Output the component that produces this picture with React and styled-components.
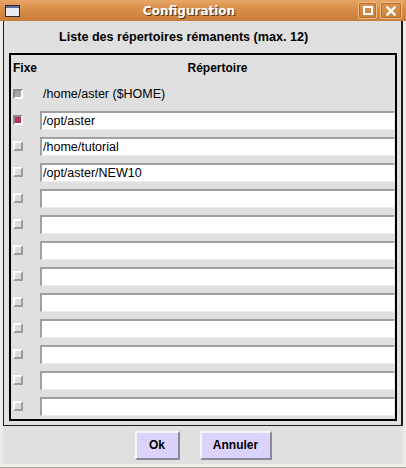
import React from 'react'
import styled, { createGlobalStyle } from 'styled-components'

const GlobalStyle = createGlobalStyle`
html, body {
  margin: 0;
  padding: 0;
  background: #efebe7;
}
body {
  font-family: "Liberation Sans", Arial, sans-serif;
}
`

const Window = styled.div`
width: 406px;
height: 468px;
box-sizing: border-box;
display: flex;
flex-direction: column;
background: #efebe7;
border-bottom: 1px solid #a8a49c;
`

const TitleBar = styled.div`
height: 21px;
flex: none;
display: flex;
align-items: center;
padding: 0 4px 0 5px;
background: linear-gradient(#e8a768, #d88d47 45%, #c87d39);
`

const Title = styled.div`
flex: 1;
text-align: center;
font-family: "DejaVu Sans", sans-serif;
font-weight: bold;
font-size: 12px;
color: #ffffff;
text-shadow: 1px 1px 0 #5a3210;
padding-top: 1px;
`

const TitleButton = styled.div`
width: ${p => p.$w}px;
height: 17px;
box-sizing: border-box;
margin-left: ${p => p.$gap}px;
display: flex;
align-items: center;
justify-content: center;
border: 1px solid #f0bd86;
border-radius: 2px;
background: linear-gradient(#dc9550, #c97f3b);
box-shadow: inset 0 0 0 1px #b86e2e;
`

const Body = styled.div`
flex: 1;
display: flex;
flex-direction: column;
margin: 0 3px 3px 3px;
background: #e0e0e0;
`

const OuterFrame = styled.div`
display: flex;
flex-direction: column;
border-left: 1px solid #1c1c1c;
border-right: 2px solid #1c1c1c;
border-bottom: 1px solid #1c1c1c;
padding: 0 4px 4px 5px;
`

const Heading = styled.div`
height: 32px;
display: flex;
align-items: center;
padding-left: 50px;
font-weight: bold;
font-size: 12.6px;
color: #000;
`

const Table = styled.div`
border: 2px solid #000;
display: grid;
grid-template-columns: 29px 1fr;
grid-auto-rows: 26px;
align-items: center;
`

const HeadCell = styled.div`
font-weight: bold;
font-size: 12px;
color: #000;
text-align: ${p => p.$center ? 'center' : 'left'};
padding-left: ${p => p.$center ? 0 : 2}px;
`

const Check = styled.span`
display: block;
width: 10px;
height: 10px;
box-sizing: border-box;
margin-left: 2px;
border: 2px solid;
border-color: ${p => p.$state === 'off' ? '#ffffff #9c9c9c #9c9c9c #ffffff' : '#8a8a8a #ffffff #ffffff #8a8a8a'};
background: ${p => p.$state === 'on' ? '#b03060' : p.$state === 'disabled' ? '#a6a6a6' : '#dcdcdc'};
`

const FixedLabel = styled.div`
font-size: 12.5px;
color: #000;
padding-left: 3px;
`

const Entry = styled.input`
display: block;
width: 100%;
height: 19px;
margin: 0;
box-sizing: border-box;
border-style: solid;
border-width: 2px 1px 1px 2px;
border-color: #a0a0a0 #ececec #ececec #a0a0a0;
background: #ffffff;
padding: 0 0 0 1px;
font-family: "Liberation Sans", Arial, sans-serif;
font-size: 12.5px;
color: #000;
outline: none;
`

const Footer = styled.div`
flex: 1;
display: flex;
align-items: center;
justify-content: center;
gap: 20px;
`

const Button = styled.button`
width: ${p => p.$w}px;
height: 29px;
box-sizing: border-box;
padding: 0;
border: 2px solid;
border-color: #f7f4ff #8c8898 #8c8898 #f7f4ff;
background: #dcd3fd;
font-family: "Liberation Sans", Arial, sans-serif;
font-weight: bold;
font-size: 12px;
color: #000;
`

const dirs = ['/opt/aster', '/home/tutorial', '/opt/aster/NEW10', '', '', '', '', '', '', '', '', '']

export default function App() {
  return (
    <>
      <GlobalStyle />
      <Window>
        <TitleBar>
          <svg width="15" height="12" viewBox="0 0 15 12">
            <rect x="0.5" y="0.5" width="14" height="11" fill="#e9ecf3" stroke="#2a2a2a" />
            <rect x="1" y="1" width="13" height="2" fill="#5b6f96" />
          </svg>
          <Title>Configuration</Title>
          <TitleButton $w={19} $gap={0}>
            <svg width="10" height="9" viewBox="0 0 10 9">
              <rect x="1" y="1" width="8" height="7" fill="none" stroke="#fff" strokeWidth="2" />
            </svg>
          </TitleButton>
          <TitleButton $w={22} $gap={3}>
            <svg width="10" height="10" viewBox="0 0 10 10">
              <path d="M1.5 1.5 L8.5 8.5 M8.5 1.5 L1.5 8.5" stroke="#fff" strokeWidth="2.4" strokeLinecap="square" />
            </svg>
          </TitleButton>
        </TitleBar>

        <Body>
          <OuterFrame>
            <Heading>Liste des répertoires rémanents (max. 12)</Heading>
            <Table>
              <HeadCell>Fixe</HeadCell>
              <HeadCell $center>Répertoire</HeadCell>

              <Check $state="disabled" />
              <FixedLabel>/home/aster ($HOME)</FixedLabel>

              {dirs.map((d, i) => (
                <React.Fragment key={i}>
                  <Check $state={i === 0 ? 'on' : 'off'} />
                  <Entry readOnly defaultValue={d} />
                </React.Fragment>
              ))}
            </Table>
          </OuterFrame>

          <Footer>
            <Button $w={45}>Ok</Button>
            <Button $w={72}>Annuler</Button>
          </Footer>
        </Body>
      </Window>
    </>
  )
}
